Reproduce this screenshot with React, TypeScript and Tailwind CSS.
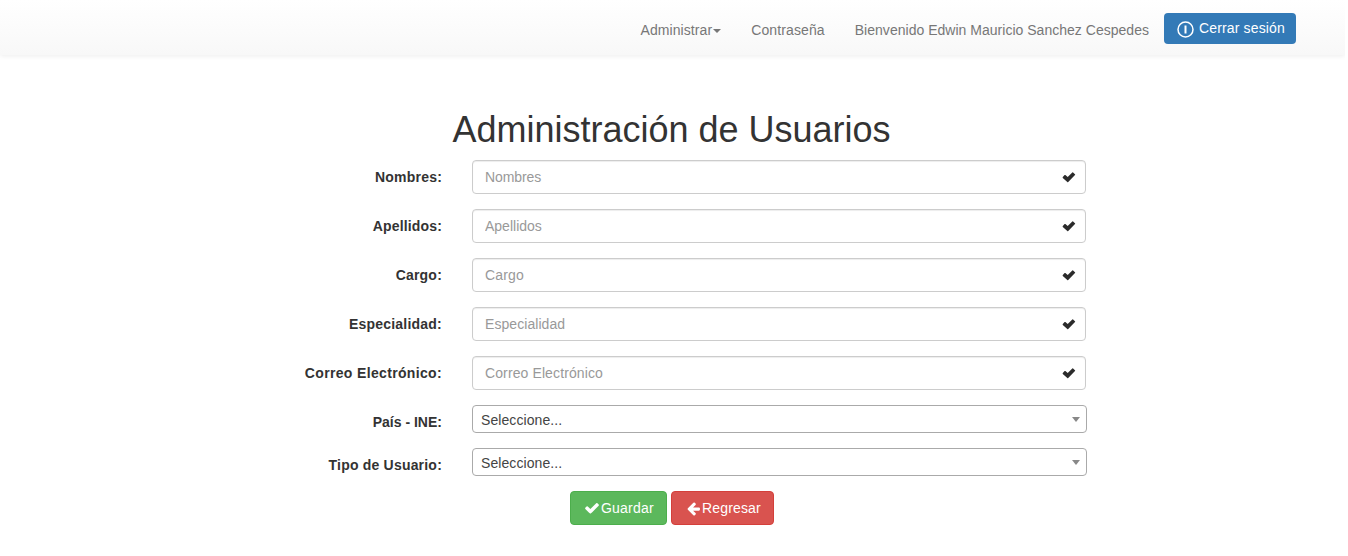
import React from 'react';

const CHECK =
  'M1671 566q0 40-28 68l-724 724-136 136q-28 28-68 28t-68-28l-136-136-362-362q-28-28-28-68t28-68l136-136q28-28 68-28t68 28l294 295 656-657q28-28 68-28t68 28l136 136q28 28 28 68z';
const ARROW_LEFT =
  'M1664 896v128q0 53-32.5 90.5t-84.5 37.5h-704l293 294q38 36 38 90t-38 90l-75 76q-37 37-90 37-52 0-91-37l-651-652q-37-37-37-90 0-52 37-91l651-650q38-38 91-38 52 0 90 38l75 74q38 38 38 91t-38 91l-293 293h704q52 0 84.5 37.5t32.5 90.5z';

type Field = { name: string; labelTracking: string; inputTracking?: string };

const textFields: Field[] = [
  { name: 'Nombres', labelTracking: 'tracking-[0.2px]', inputTracking: 'tracking-[-0.1px]' },
  { name: 'Apellidos', labelTracking: 'tracking-[0.15px]' },
  { name: 'Cargo', labelTracking: 'tracking-[0.2px]', inputTracking: 'tracking-[0.15px]' },
  { name: 'Especialidad', labelTracking: 'tracking-[0.22px]', inputTracking: 'tracking-[0.06px]' },
  { name: 'Correo Electrónico', labelTracking: 'tracking-[0.34px]', inputTracking: 'tracking-[0.11px]' },
];
const selectFields: Field[] = [
  { name: 'País - INE', labelTracking: 'tracking-normal' },
  { name: 'Tipo de Usuario', labelTracking: 'tracking-[0.2px]' },
];

function Label({ field }: { field: Field }) {
  return (
    <label
      htmlFor={field.name}
      className={`w-[442px] shrink-0 pt-[7px] text-right font-bold ${field.labelTracking}`}
    >
      {field.name}:
    </label>
  );
}

function TextField({ field }: { field: Field }) {
  return (
    <div className="mb-[15px] flex h-[34px]">
      <Label field={field} />
      <div className="relative ml-[30px] w-[614px]">
        <input
          id={field.name}
          placeholder={field.name}
          className={`block h-[34px] w-full rounded-[4px] border border-[#ccc] bg-white px-3 py-[6px] text-[#555] shadow-[inset_0_1px_1px_rgba(0,0,0,0.075)] outline-none placeholder:text-[#999] ${field.inputTracking ?? ''}`}
        />
        <svg viewBox="0 0 14 11" className="absolute top-[12px] right-[10px] h-[11px] w-[14px]" fill="#2b2b2b">
          <path d="M.8 5 2.6 3.1q.4-.4.8 0L5.7 5.1 10.3.4q.4-.4.8 0l1.9 1.8q.4.4 0 .8L6.2 10q-.5.4-.9 0L.8 5.9q-.4-.4 0-.9z" />
        </svg>
      </div>
    </div>
  );
}

function SelectField({ field }: { field: Field }) {
  return (
    <div className="mb-[15px] flex h-7">
      <Label field={field} />
      <button
        id={field.name}
        type="button"
        className="ml-[30px] flex h-7 w-[615px] items-center justify-between rounded-[4px] border border-[#aaa] bg-white pr-[6px] pl-2 text-[#444]"
      >
        <span className="pt-[2px] tracking-[0.08px]">Seleccione...</span>
        <span className="h-0 w-0 border-x-4 border-t-[5px] border-x-transparent border-t-[#888]" />
      </button>
    </div>
  );
}

export default function App() {
  return (
    <div className="h-[556px] w-[1345px] overflow-hidden bg-white font-['Liberation_Sans',Arial,sans-serif] text-[14px] leading-5 text-[#333]">
      <nav className="flex h-[55px] items-start justify-end bg-gradient-to-b from-white to-[#f8f8f8] pr-[49px] text-[#777] shadow-[0_1px_5px_rgba(0,0,0,0.075)]">
        <a className="mt-5 mr-[30px] flex items-center tracking-[0.08px]">
          Administrar
          <span className="mt-px ml-px h-0 w-0 border-x-4 border-t-4 border-x-transparent border-t-[#777]" />
        </a>
        <a className="mt-5 mr-[30px] tracking-[0.12px]">Contraseña</a>
        <a className="mt-5 mr-[15px] tracking-[0.02px]">Bienvenido Edwin Mauricio Sanchez Cespedes</a>
        <button
          type="button"
          className="mt-[13px] flex h-[31px] w-[132px] items-center rounded-[4px] bg-[#337ab7] pl-[13px] text-white"
        >
          <svg viewBox="0 0 17 17" className="mt-px mr-[5px] h-[17px] w-[17px]" fill="none" stroke="currentColor">
            <circle cx="8.5" cy="8.5" r="7.5" strokeWidth="1.5" />
            <path d="M8.5 4.5v8" strokeWidth="2" />
          </svg>
          <span className="pb-[2px] tracking-[0.15px]">Cerrar sesión</span>
        </button>
      </nav>
      <main>
        <h1 className="mt-[55px] mb-[10px] pr-[2px] text-center text-[36px] leading-10 font-normal">
          Administración de Usuarios
        </h1>
        <form>
          {textFields.map((field) => (
            <TextField key={field.name} field={field} />
          ))}
          {selectFields.map((field) => (
            <SelectField key={field.name} field={field} />
          ))}
          <div className="flex gap-1 pl-[570px] text-white">
            <button
              type="button"
              className="flex h-[34px] w-[97px] items-center rounded-[4px] border border-[#4cae4c] bg-[#5cb85c] pl-[13px]"
            >
              <svg viewBox="0 0 1792 1792" className="mr-px h-[16px] w-[16px]" fill="currentColor">
                <path d={CHECK} />
              </svg>
              <span className="tracking-[0.2px]">Guardar</span>
            </button>
            <button
              type="button"
              className="flex h-[34px] w-[103px] items-center rounded-[4px] border border-[#d43f3a] bg-[#d9534f] pl-[14px]"
            >
              <svg viewBox="0 0 1792 1792" className="mr-px h-[15px] w-[15px]" fill="currentColor">
                <path d={ARROW_LEFT} />
              </svg>
              <span className="tracking-[0.15px]">Regresar</span>
            </button>
          </div>
        </form>
      </main>
    </div>
  );
}
